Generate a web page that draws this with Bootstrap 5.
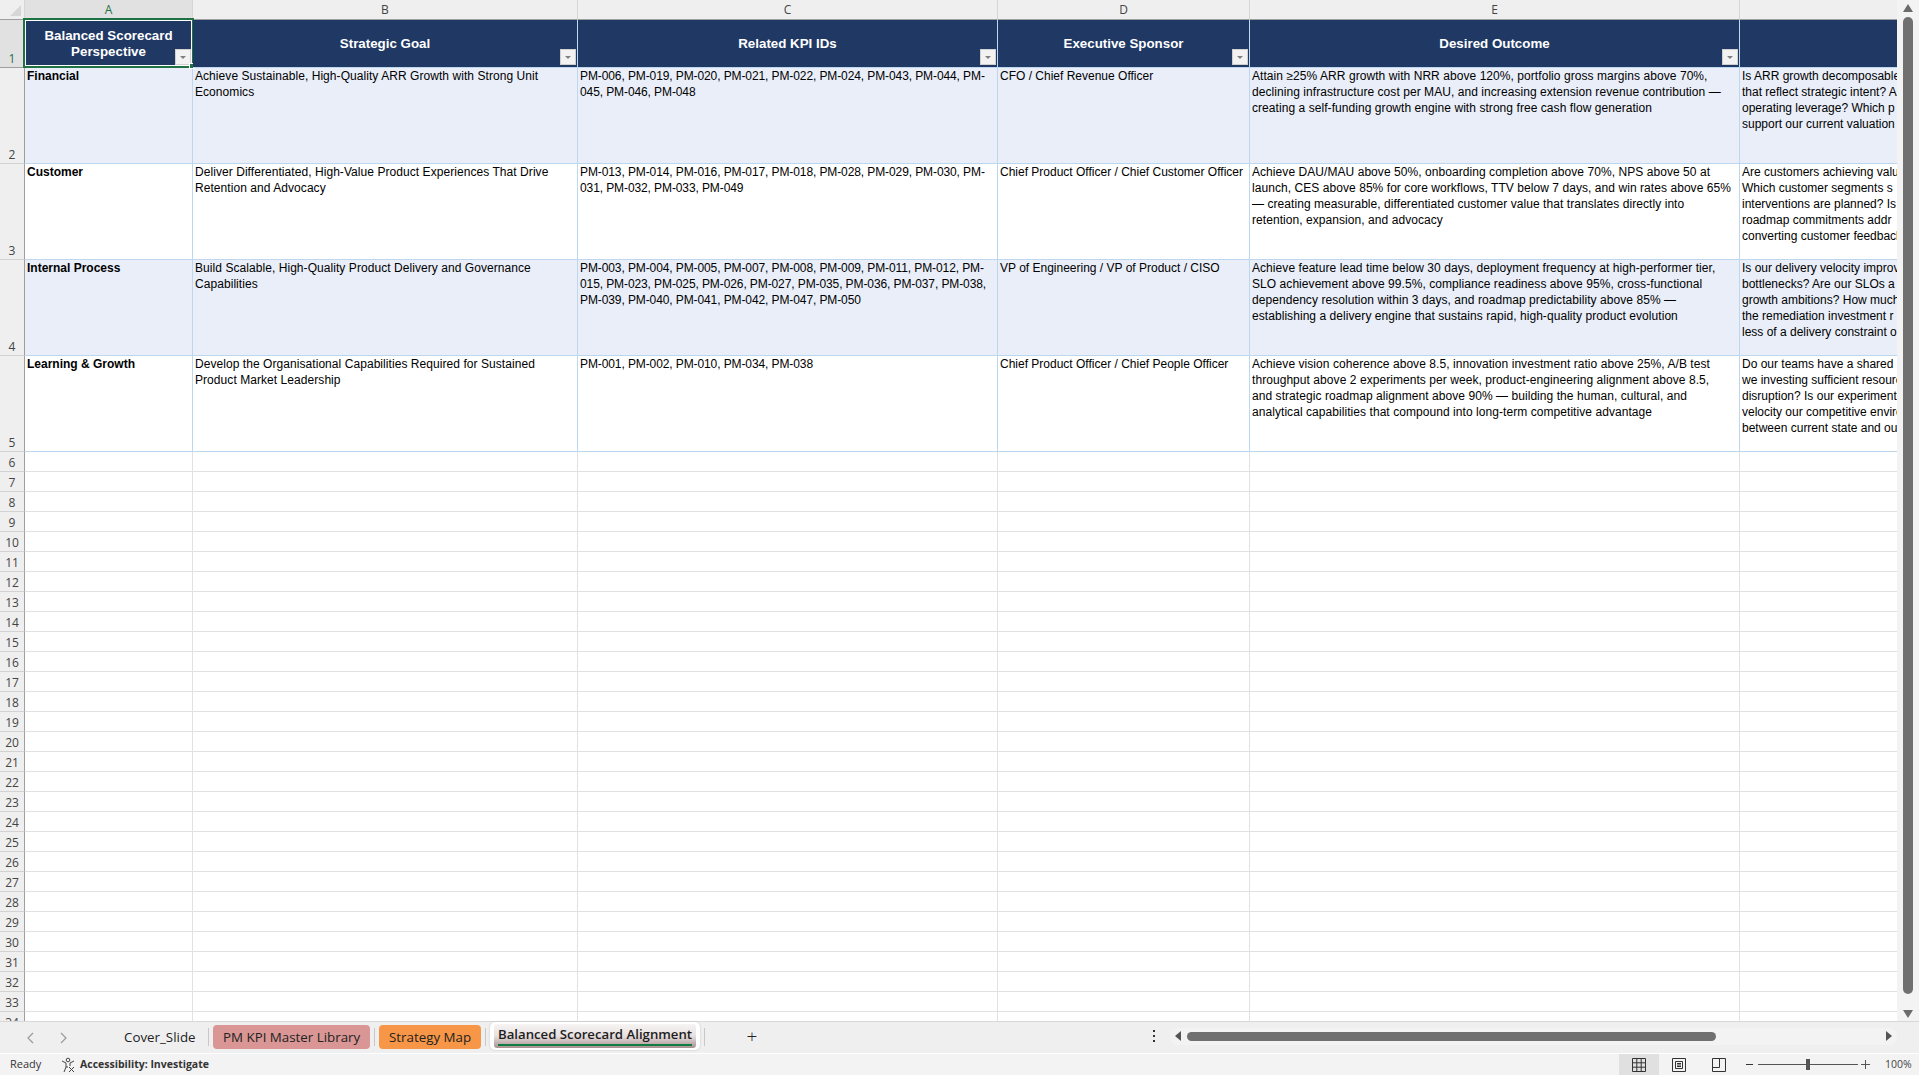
<!DOCTYPE html>
<html lang="en">
<head>
  <meta charset="UTF-8">
  <title>Balanced Scorecard Alignment</title>
  <link href="https://cdn.jsdelivr.net/npm/bootstrap@5.3.0/dist/css/bootstrap.min.css" rel="stylesheet">
  <style>
    body {
      background-color: #efefef;
      font-family: "Liberation Sans", Arial, sans-serif;
      overflow: hidden;
    }

    .sheet-area {
      height: 1021px;
    }

    .grid-wrap {
      width: 1897px;
      overflow: hidden;
      background-color: #fff;
    }

    .sheet-table {
      table-layout: fixed;
      width: 1740px;
      margin: 0;
      border-collapse: separate;
      border-spacing: 0;
      font-size: 12px;
      line-height: 16px;
      color: #000;
    }

    .sheet-table th,
    .sheet-table td {
      padding: 0 2px;
      border-width: 0 1px 1px 0;
      border-style: solid;
      border-color: #e1e1e1;
      box-sizing: border-box;
      vertical-align: top;
      box-shadow: none;
    }

    .sheet-table .body-row td:nth-child(3) {
      letter-spacing: 0.06px;
    }

    .sheet-table .body-row td:nth-child(4) {
      letter-spacing: -0.1px;
    }

    .sheet-table .body-row td:nth-child(6) {
      letter-spacing: 0.06px;
      white-space: nowrap;
    }

    .col-letters th {
      height: 20px;
      background-color: #efefef;
      border-color: #d6d6d6;
      border-bottom-color: #9e9e9e;
      font-family: "Open Sans", sans-serif;
      font-weight: 400;
      font-size: 12px;
      line-height: 19px;
      text-align: center;
      color: #444;
      padding: 0;
    }

    .col-letters th.picked {
      background-color: #e1e1e1;
      color: #1f7244;
    }

    .col-letters th.corner {
      position: relative;
    }

    .corner-mark {
      position: absolute;
      left: 10px;
      top: 5px;
      width: 11px;
      height: 11px;
      background-color: #d6d6d6;
      clip-path: polygon(100% 0, 100% 100%, 0 100%);
    }

    .sheet-table .row-no {
      background-color: #efefef;
      border-color: #d2d2d2;
      border-bottom-color: #d2d2d2;
      border-right-color: #9e9e9e;
      font-family: "Open Sans", sans-serif;
      font-size: 12px;
      font-weight: 400;
      text-align: center;
      vertical-align: bottom;
      color: #444;
      padding: 0;
      line-height: 16px;
    }

    .sheet-table .row-no.picked {
      background-color: #e1e1e1;
      color: #1f7244;
      border-bottom-color: #9e9e9e;
    }

    .head-row th {
      height: 48px;
      background-color: #1f3864;
      border-color: #bdd7ee;
      border-bottom-color: #bdd7ee;
      color: #fff;
      font-size: 13.33px;
      font-weight: 700;
      text-align: center;
      vertical-align: middle;
      position: relative;
    }

    .filter-btn {
      position: absolute;
      right: 1px;
      bottom: 2px;
      width: 16px;
      height: 16px;
      background-color: #f2f2f2;
      border: 1px solid #d0d0d0;
    }

    .filter-btn::after {
      content: "";
      position: absolute;
      left: 4px;
      top: 6px;
      border-style: solid;
      border-width: 3px 3.5px 0 3.5px;
      border-color: #7f7f7f transparent transparent transparent;
    }

    .active-cell {
      position: absolute;
      left: -2px;
      top: -2px;
      right: -2px;
      bottom: -1px;
      border: 2px solid #1f7244;
      outline: 1px solid #fff;
      outline-offset: -3px;
      pointer-events: none;
    }

    .fill-handle {
      position: absolute;
      right: -3px;
      bottom: -3px;
      width: 6px;
      height: 6px;
      background-color: #1f7244;
      border: 1px solid #fff;
    }

    .body-row td {
      height: 96px;
      border-color: #bdd7ee;
    }

    .body-row .row-no {
      height: 96px;
    }

    .body-row.banded td:not(.row-no) {
      background-color: #e9eef9;
    }

    .persp {
      font-weight: 700;
    }

    .empty-row td {
      height: 20px;
    }

    .clip-lines {
      white-space: nowrap;
      overflow: hidden;
    }

    .v-scroll {
      width: 22px;
      background-color: #f3f3f3;
    }

    .v-arrow-up,
    .v-arrow-down {
      width: 0;
      height: 0;
      position: absolute;
      left: 6px;
      border-left: 5px solid transparent;
      border-right: 5px solid transparent;
    }

    .v-arrow-up {
      top: 4px;
      border-bottom: 8px solid #6b6b6b;
    }

    .v-arrow-down {
      bottom: 3px;
      border-top: 8px solid #6b6b6b;
    }

    .v-thumb {
      position: absolute;
      left: 6px;
      top: 17px;
      width: 10px;
      height: 977px;
      border-radius: 5px;
      background-color: #707070;
    }

    .tabs-bar {
      height: 32px;
      background-color: #efefef;
      font-family: "Open Sans", sans-serif;
      font-size: 13.33px;
      color: #222;
      border-top: 1px solid #d8d8d8;
    }

    .tab-arrow {
      width: 33px;
      text-align: center;
    }

    .arrows {
      padding-left: 14px;
      width: 118px;
    }

    .sheet-tab {
      height: 24px;
      line-height: 24px;
      border-radius: 4px;
      padding: 0 10px;
      white-space: nowrap;
      margin-top: 3px;
    }

    .tab-plain {
      width: 86px;
      padding: 0 6px;
    }

    .tab-rose {
      background-color: #d99694;
      width: 157px;
    }

    .tab-orange {
      background-color: #f79646;
      width: 102px;
    }

    .tab-active {
      position: relative;
      width: 210px;
      height: 28px;
      margin-top: 0;
      background-color: #fff;
      border-radius: 5px;
      box-shadow: 0 0 2px #bdbdbd;
      padding: 2px 4px;
    }

    .tab-active-inner {
      height: 24px;
      line-height: 21px;
      padding: 0 4px;
      border-radius: 3px;
      font-weight: 600;
      font-size: 13.2px;
      color: #1c1c1c;
      background: linear-gradient(#f7f4f4, #e8e0e0 50%, #a88f8f);
      position: relative;
    }

    .tab-active-inner::after {
      content: "";
      position: absolute;
      left: 4px;
      right: 4px;
      bottom: 2px;
      height: 2px;
      background-color: #107c41;
    }

    .tab-sep {
      width: 1px;
      height: 18px;
      margin: 6px 4px 0 4px;
      background-color: #c8c8c8;
    }

    .add-sheet {
      width: 20px;
      margin-left: 33px;
      font-size: 19px;
      line-height: 29px;
      text-align: center;
      font-weight: 300;
    }

    .h-scroll {
      position: absolute;
      left: 1170px;
      top: 6px;
      width: 727px;
      height: 17px;
      border-radius: 8px;
      background-color: #f3f3f3;
    }

    .h-thumb {
      position: absolute;
      left: 17px;
      top: 4px;
      width: 529px;
      height: 9px;
      border-radius: 5px;
      background-color: #707070;
    }

    .h-arrow-left,
    .h-arrow-right {
      position: absolute;
      top: 3px;
      border-top: 5.5px solid transparent;
      border-bottom: 5.5px solid transparent;
    }

    .h-arrow-left {
      left: 5px;
      border-right: 6px solid #555;
    }

    .h-arrow-right {
      right: 5px;
      border-left: 6px solid #555;
    }

    .dots {
      position: absolute;
      left: 1153px;
      top: 8px;
    }

    .dots i {
      display: block;
      width: 2px;
      height: 2px;
      margin: 0 0 3px;
      background-color: #333;
    }

    .status-bar {
      height: 22px;
      background-color: #f3f3f3;
      border-top: 1px solid #fff;
      font-family: "Open Sans", sans-serif;
      font-size: 11px;
      color: #333;
    }

    .status-ready {
      padding-left: 10px;
      width: 60px;
    }

    .status-access {
      font-weight: 700;
      color: #333;
      font-size: 10.5px;
    }

    .view-btn {
      width: 40px;
      height: 21px;
    }

    .view-on {
      background-color: #e0e0e0;
    }

    .zoom-minus {
      margin-left: 6px;
    }

    .zoom-track {
      position: relative;
      width: 100px;
      height: 1px;
      background-color: #555;
      margin: 0 3px 0 4px;
    }

    .zoom-knob {
      position: absolute;
      left: 48px;
      top: -5px;
      width: 4px;
      height: 11px;
      background-color: #555;
    }

    .zoom-pct {
      width: 49px;
      padding-left: 15px;
      color: #444;
      font-size: 10.5px;
    }
  </style>
</head>
<body>
  <div class="d-flex sheet-area">
    <div class="grid-wrap">
      <table class="sheet-table" id="sheet">
        <colgroup>
          <col style="width:25px"><col style="width:168px"><col style="width:385px"><col style="width:420px"><col style="width:252px"><col style="width:490px"><col style="width:500px">
        </colgroup>
        <thead>
          <tr class="col-letters">
            <th class="corner"><span class="corner-mark"></span></th>
            <th class="picked">A</th><th>B</th><th>C</th><th>D</th><th>E</th><th></th>
          </tr>
        </thead>
        <tbody>
          <tr class="head-row">
            <td class="row-no picked">1</td>
            <th>Balanced Scorecard Perspective<span class="filter-btn"></span><span class="active-cell"><span class="fill-handle"></span></span></th>
            <th>Strategic Goal<span class="filter-btn"></span></th>
            <th>Related KPI IDs<span class="filter-btn"></span></th>
            <th>Executive Sponsor<span class="filter-btn"></span></th>
            <th>Desired Outcome<span class="filter-btn"></span></th>
            <th></th>
          </tr>
          <tr class="body-row banded">
            <td class="row-no">2</td>
            <td class="persp">Financial</td>
            <td>Achieve Sustainable, High-Quality ARR Growth with Strong Unit Economics</td>
            <td>PM-006, PM-019, PM-020, PM-021, PM-022, PM-024, PM-043, PM-044, PM-045, PM-046, PM-048</td>
            <td>CFO / Chief Revenue Officer</td>
            <td>Attain ≥25% ARR growth with NRR above 120%, portfolio gross margins above 70%,<br>declining infrastructure cost per MAU, and increasing extension revenue contribution —<br>creating a self-funding growth engine with strong free cash flow generation</td>
            <td class="clip-lines">Is ARR growth decomposable<br>that reflect strategic intent? A<br>operating leverage? Which p<br>support our current valuation</td>
          </tr>
          <tr class="body-row">
            <td class="row-no">3</td>
            <td class="persp">Customer</td>
            <td>Deliver Differentiated, High-Value Product Experiences That Drive Retention and Advocacy</td>
            <td>PM-013, PM-014, PM-016, PM-017, PM-018, PM-028, PM-029, PM-030, PM-031, PM-032, PM-033, PM-049</td>
            <td>Chief Product Officer / Chief Customer Officer</td>
            <td>Achieve DAU/MAU above 50%, onboarding completion above 70%, NPS above 50 at<br>launch, CES above 85% for core workflows, TTV below 7 days, and win rates above 65%<br>— creating measurable, differentiated customer value that translates directly into<br>retention, expansion, and advocacy</td>
            <td class="clip-lines">Are customers achieving value<br>Which customer segments s<br>interventions are planned? Is<br>roadmap commitments addr<br>converting customer feedback</td>
          </tr>
          <tr class="body-row banded">
            <td class="row-no">4</td>
            <td class="persp">Internal Process</td>
            <td>Build Scalable, High-Quality Product Delivery and Governance Capabilities</td>
            <td>PM-003, PM-004, PM-005, PM-007, PM-008, PM-009, PM-011, PM-012, PM-015, PM-023, PM-025, PM-026, PM-027, PM-035, PM-036, PM-037, PM-038, PM-039, PM-040, PM-041, PM-042, PM-047, PM-050</td>
            <td>VP of Engineering / VP of Product / CISO</td>
            <td>Achieve feature lead time below 30 days, deployment frequency at high-performer tier,<br>SLO achievement above 99.5%, compliance readiness above 95%, cross-functional<br>dependency resolution within 3 days, and roadmap predictability above 85% —<br>establishing a delivery engine that sustains rapid, high-quality product evolution</td>
            <td class="clip-lines">Is our delivery velocity improving<br>bottlenecks? Are our SLOs a<br>growth ambitions? How much<br>the remediation investment r<br>less of a delivery constraint o</td>
          </tr>
          <tr class="body-row">
            <td class="row-no">5</td>
            <td class="persp">Learning &amp; Growth</td>
            <td>Develop the Organisational Capabilities Required for Sustained Product Market Leadership</td>
            <td>PM-001, PM-002, PM-010, PM-034, PM-038</td>
            <td>Chief Product Officer / Chief People Officer</td>
            <td>Achieve vision coherence above 8.5, innovation investment ratio above 25%, A/B test<br>throughput above 2 experiments per week, product-engineering alignment above 8.5,<br>and strategic roadmap alignment above 90% — building the human, cultural, and<br>analytical capabilities that compound into long-term competitive advantage</td>
            <td class="clip-lines">Do our teams have a shared<br>we investing sufficient resources<br>disruption? Is our experiment<br>velocity our competitive enviro<br>between current state and our</td>
          </tr>
        </tbody>
      </table>
    </div>
    <div class="v-scroll position-relative">
      <span class="v-arrow-up"></span>
      <span class="v-thumb"></span>
      <span class="v-arrow-down"></span>
    </div>
  </div>

  <div class="tabs-bar d-flex position-relative">
    <div class="arrows d-flex align-items-center">
      <svg class="tab-arrow" height="12" viewBox="0 0 33 12"><path d="M19 1l-5 5 5 5" fill="none" stroke="#9a9a9a" stroke-width="1.2"/></svg>
      <svg class="tab-arrow" height="12" viewBox="0 0 33 12"><path d="M14 1l5 5-5 5" fill="none" stroke="#9a9a9a" stroke-width="1.2"/></svg>
    </div>
    <div class="sheet-tab tab-plain">Cover_Slide</div>
    <div class="tab-sep"></div>
    <div class="sheet-tab tab-rose">PM KPI Master Library</div>
    <div class="tab-sep"></div>
    <div class="sheet-tab tab-orange">Strategy Map</div>
    <div class="tab-sep"></div>
    <div class="sheet-tab tab-active"><div class="tab-active-inner">Balanced Scorecard Alignment</div></div>
    <div class="tab-sep"></div>
    <div class="add-sheet">+</div>
    <div class="dots"><i></i><i></i><i></i></div>
    <div class="h-scroll">
      <span class="h-arrow-left"></span>
      <span class="h-thumb"></span>
      <span class="h-arrow-right"></span>
    </div>
  </div>

  <div class="status-bar d-flex align-items-center">
    <div class="status-ready">Ready</div>
    <svg width="16" height="16" viewBox="0 0 16 16" class="me-1" fill="none" stroke="#444" stroke-width="1">
      <circle cx="8" cy="3" r="1.8"/>
      <path d="M2 4l4 2v4l-2 5M14 4l-4 2v3M6 10h2"/>
      <path d="M9 10l5 5M14 10l-5 5"/>
    </svg>
    <div class="status-access">Accessibility: Investigate</div>
    <div class="ms-auto view-btn view-on d-flex align-items-center justify-content-center">
      <svg width="14" height="14" viewBox="0 0 14 14" fill="none" stroke="#333" stroke-width="1"><path d="M.5.5h13v13H.5zM.5 4.8h13M.5 9.2h13M4.8.5v13M9.2.5v13"/></svg>
    </div>
    <div class="view-btn d-flex align-items-center justify-content-center">
      <svg width="14" height="14" viewBox="0 0 14 14" fill="none" stroke="#333" stroke-width="1"><path d="M.5.5h13v13H.5zM3.5 3.5h7v7h-7zM5 5.5h4M5 7h4M5 8.5h4"/></svg>
    </div>
    <div class="view-btn d-flex align-items-center justify-content-center">
      <svg width="14" height="14" viewBox="0 0 14 14" fill="none" stroke="#333" stroke-width="1"><path d="M.5.5h13v13H.5zM.5 9.5h7V.5M7.5 5V.5"/></svg>
    </div>
    <svg width="9" height="9" viewBox="0 0 9 9" class="zoom-minus" fill="none" stroke="#333"><path d="M1 4.5h7"/></svg>
    <div class="zoom-track"><span class="zoom-knob"></span></div>
    <svg width="9" height="9" viewBox="0 0 9 9" fill="none" stroke="#555"><path d="M0 4.5h9M4.5 0v9"/></svg>
    <div class="zoom-pct">100%</div>
  </div>

  <script src="https://cdn.jsdelivr.net/npm/bootstrap@5.3.0/dist/js/bootstrap.bundle.min.js"></script>
  <script>
    // empty rows 6..34
    const tbody = document.querySelector('#sheet tbody');
    for (let r = 6; r <= 34; r++) {
      const tr = document.createElement('tr');
      tr.className = 'empty-row';
      tr.innerHTML = `<td class="row-no">${r}</td>` + '<td></td>'.repeat(6);
      tbody.appendChild(tr);
    }
  </script>
</body>
</html>
